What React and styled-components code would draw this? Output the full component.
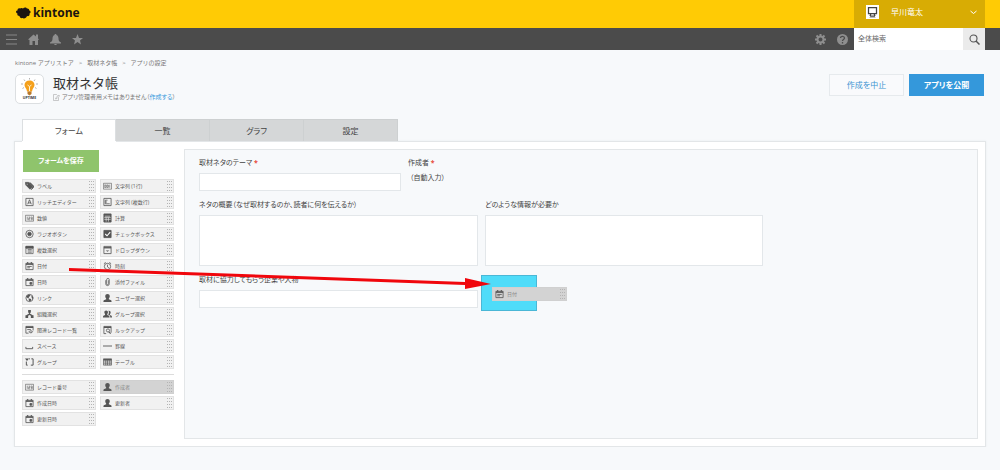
import React from "react"
import styled, { createGlobalStyle } from "styled-components"

const dark = "#555"

// field glyphs, drawn on a 20x20 grid
const glyphs = {
  tag: (
    <>
      <path fill="currentColor" d="M1 2h7l9 9-6 6-9-9z" />
      <path fill="currentColor" d="M10 3l8 8-4 7 5-5c1-1 1-2 0-3l-7-7z" />
      <circle cx="5" cy="6" r="1.6" fill="#fff" />
    </>
  ),
  text: (
    <>
      <path d="M1 4h18v13H1zM4 7v7M4 8h3v5H4M9 7v7M9 8h3v5H9M15 7v7" strokeWidth="1.3" />
    </>
  ),
  rich: <path d="M2 2h16v16H2zM6 15l4-10 4 10M7 12h6" />,
  multi: <path d="M2 2h16v16H2zM5 6h5M5 6v8h10M5 10h4" />,
  number: <path d="M1 4h18v13H1zM5 7v7M8 8h3v3H8v3h3M13 8h3v6h-3M13 11h3" strokeWidth="1.3" />,
  calc: (
    <>
      <path fill="currentColor" d="M2 1h16v18H2z" />
      <path stroke="#f1f1f1" strokeWidth="1.4" d="M4 6h12M3 9h14M3 13h14M7 9v9M12 9v9" />
    </>
  ),
  radio: (
    <>
      <circle cx="10" cy="10" r="8.2" />
      <circle cx="10" cy="10" r="4" fill="currentColor" />
    </>
  ),
  check: (
    <>
      <path fill="currentColor" d="M2 2h16v16H2z" />
      <path stroke="#fff" strokeWidth="2.4" d="M5 10l4 4 7-8" />
    </>
  ),
  list: (
    <>
      <path d="M2 2h16v16H2zM6 9h9M6 12h9M6 15h9" strokeWidth="1.6" />
      <path fill="currentColor" d="M2 2h16v4H2z" />
    </>
  ),
  dropdown: (
    <>
      <path d="M2 2h16v16H2z" />
      <path d="M2 5h16" strokeWidth="3" />
      <path fill="currentColor" stroke="none" d="M6 11h8l-4 3z" />
    </>
  ),
  date: (
    <>
      <path d="M2 4h16v14H2zM5 11h10M5 14h6" />
      <path d="M2 6h16" strokeWidth="3" />
      <path d="M6 1v4M14 1v4" strokeWidth="2.4" />
    </>
  ),
  datetime: (
    <>
      <path d="M2 4h16v14H2z" />
      <path d="M2 6h16" strokeWidth="3" />
      <path d="M6 1v4M14 1v4" strokeWidth="2.4" />
      <path fill="currentColor" d="M11 11h4v4h-4z" />
    </>
  ),
  time: (
    <>
      <circle cx="10" cy="11" r="7" />
      <path d="M10 7v5l3 2M2 5l4-3M18 5l-4-3" />
    </>
  ),
  clip: <path d="M6 6v8a4 4 0 0 0 8 0V5a3 3 0 0 0-6 0v9a1.5 1.5 0 0 0 4 0V6" strokeWidth="1.6" />,
  globe: (
    <>
      <circle cx="10" cy="10" r="8" />
      <path fill="currentColor" stroke="none" d="M3 6l5-4 4 1-1 3-3 2 1 2-2 1-4-3zM9 11l5 1-1 4-3 2-2-4zM14 5l4 3v5l-3-3z" />
    </>
  ),
  user: (
    <path fill="currentColor" stroke="none" d="M10 1c3 0 5 2 5 5 0 2-1 4-2 5v2l5 2c1 .6 1 2 1 4H1c0-2 0-3.400 1-4l5-2v-2C6 10 5 8 5 6c0-3 2-5 5-5z" />
  ),
  org: (
    <path fill="currentColor" stroke="none" d="M7 1h6v6h-2v2l6 4h2v6h-6v-5l-3-2-3 2v5H1v-6h2l6-4V7H7z" />
  ),
  group: (
    <path fill="currentColor" stroke="none" d="M7 2c2.500 0 4 1.600 4 4 0 2-1 3-1.500 4v2l4 2c.7.500 1 2 1 4H0c0-2 0-3.500 1-4l3.500-2v-2C4 9 3 8 3 6c0-2.400 1.600-4 4-4zM12 3c3-1 5 1 5 3.500 0 2-1 3-1.500 4v1.500l3.500 2c.7.500 1 2 1 4h-4c0-3 0-4-1.500-5L12 12v-1c1-2 2-5 0-8z" />
  ),
  related: (
    <>
      <path d="M8 17H2V2h16v9M5 9h8" />
      <path d="M2 4h16" strokeWidth="3" />
      <path d="M9 14c1-3 7-3 8 0-1 3-7 3-8 0zM13 14v1" />
    </>
  ),
  lookup: (
    <>
      <path d="M7 18H2V2h16v14" />
      <path d="M2 4h16" strokeWidth="3" />
      <circle cx="11" cy="11" r="3.5" />
      <path d="M13 14l4 4" strokeWidth="2.4" />
    </>
  ),
  space: <path d="M2 12v4h15v-4" strokeWidth="2" />,
  line: <path d="M0 10h20" strokeWidth="2" />,
  box: (
    <>
      <path d="M6 17H3V9M14 3h4v14h-5M9 3h2" strokeWidth="2.2" />
      <path fill="currentColor" stroke="none" d="M0 2h9L4.500 8z" />
    </>
  ),
  table: (
    <>
      <path d="M1 3h18v14H1zM1 10h18M1 14h18M6 6v11M10 6v11M15 6v11" strokeWidth="1.5" />
      <path d="M1 5h18" strokeWidth="4" />
    </>
  ),
}

function Glyph({ name }) {
  return (
    <GlyphSvg viewBox="0 0 20 20" aria-hidden="true">
      {glyphs[name]}
    </GlyphSvg>
  )
}

function Part({ icon, children, used }) {
  return (
    <PartButton type="button" $used={used}>
      <Glyph name={icon} />
      <span>{children}</span>
      <Grip />
    </PartButton>
  )
}

const basicParts = [
  ["tag", "ラベル"],
  ["text", "文字列 (1行)"],
  ["rich", "リッチエディター"],
  ["multi", "文字列 (複数行)"],
  ["number", "数値"],
  ["calc", "計算"],
  ["radio", "ラジオボタン"],
  ["check", "チェックボックス"],
  ["list", "複数選択"],
  ["dropdown", "ドロップダウン"],
  ["date", "日付"],
  ["time", "時刻"],
  ["datetime", "日時"],
  ["clip", "添付ファイル"],
  ["globe", "リンク"],
  ["user", "ユーザー選択"],
  ["org", "組織選択"],
  ["group", "グループ選択"],
  ["related", "関連レコード一覧"],
  ["lookup", "ルックアップ"],
  ["space", "スペース"],
  ["line", "罫線"],
  ["box", "グループ"],
  ["table", "テーブル"],
]

const systemParts = [
  ["number", "レコード番号"],
  ["user", "作成者", true],
  ["datetime", "作成日時"],
  ["user", "更新者"],
  ["datetime", "更新日時"],
]

function Header() {
  return (
    <header>
      <Brand>
        <Logo href="#">
          <svg width="15" height="12" viewBox="0 0 30 24" aria-hidden="true">
            <path fill="#1c1410" d="M8 3c2-2 5-1 6 0 2-3 7-3 8 0 3-1 5 2 4 4 4 0 4 5 1 6 1 4-2 6-5 5-1 4-6 6-9 4-3 1-6-1-6-4-4 0-5-3-4-5-4-1-4-6 0-6 0-3 2-5 5-4z" />
          </svg>
          kintone
        </Logo>
        <UserMenu type="button">
          <svg width="13" height="14" viewBox="0 0 26 28" aria-hidden="true">
            <path fill="#fff" d="M0 0h26v28H0z" />
            <path fill="none" stroke="#444" strokeWidth="2.5" d="M5 5h16v12H5zM10 17l-2 5M16 17l2 5M8 22h10" />
            <path fill="#bbb" d="M7 24h12v2H7z" />
          </svg>
          <UserName>早川竜太</UserName>
          <svg width="7" height="5" viewBox="0 0 14 10" aria-hidden="true">
            <path fill="none" stroke="#fff" strokeWidth="2" d="M1 2l6 5 6-5" />
          </svg>
        </UserMenu>
      </Brand>
      <Nav>
        <NavButton type="button" aria-label="メニュー">
          <svg viewBox="0 0 22 22"><path fill="none" stroke="currentColor" strokeWidth="1.8" d="M0 2h22M0 11h22M0 20h22" /></svg>
        </NavButton>
        <NavButton type="button" aria-label="ポータル">
          <svg viewBox="0 0 22 22"><path fill="currentColor" d="M11 1l5 4V1h4v8l2 2-2 1v10h-6v-8H9v8H3V12l-3-1z" /></svg>
        </NavButton>
        <NavButton type="button" aria-label="通知">
          <svg viewBox="0 0 22 22"><path fill="currentColor" d="M11 0c1.500 0 2 1 2 2 3 1 4 4 4 7 0 4 1 6 5 8v2H0v-2c4-2 5-4 5-8 0-3 1-6 4-7 0-1 .5-2 2-2zM8 20h6c-1 3-5 3-6 0z" /></svg>
        </NavButton>
        <NavButton type="button" aria-label="ブックマーク">
          <svg viewBox="0 0 22 22"><path fill="currentColor" d="M11 0l3 8h8l-6 5 2 8-7-5-7 5 2-8-6-5h8z" /></svg>
        </NavButton>
        <NavSpacer />
        <NavButton type="button" aria-label="設定メニュー">
          <svg viewBox="0 0 22 22">
            <circle cx="11" cy="11" r="6" fill="none" stroke="currentColor" strokeWidth="4" />
            <path stroke="currentColor" strokeWidth="4" d="M11 0v4M11 18v4M0 11h4M18 11h4M3 3l3 3M16 16l3 3M3 19l3-3M16 6l3-3" />
          </svg>
        </NavButton>
        <NavButton type="button" aria-label="ヘルプ">
          <svg viewBox="0 0 22 22">
            <circle cx="11" cy="11" r="11" fill="currentColor" />
            <path fill="none" stroke="#4b4b4b" strokeWidth="2.6" d="M7 8c0-5 8-4 8 0 0 3-4 3-4 6M11 16v3" />
          </svg>
        </NavButton>
        <Search>
          <SearchInput type="search" placeholder="全体検索" aria-label="全体検索" />
          <SearchButton type="button" aria-label="検索">
            <svg width="11" height="11" viewBox="0 0 22 22">
              <circle cx="9" cy="9" r="7" fill="none" stroke="#555" strokeWidth="2.2" />
              <path stroke="#555" strokeWidth="3" d="M14 14l7 7" />
            </svg>
          </SearchButton>
        </Search>
      </Nav>
    </header>
  )
}

function AppHeading() {
  return (
    <Heading>
      <AppIcon>
        <svg width="23" height="23" viewBox="0 0 46 46" aria-hidden="true">
          <path fill="#f4a01c" d="M23 5c6 0 10 4 10 9 0 4-3 6-4 9l-1 4H18l-1-4c-1-3-4-5-4-9 0-5 4-9 10-9z" />
          <path fill="#b9782a" d="M19 27h8v5l-4 3-4-3z" />
          <path stroke="#fff3d0" strokeWidth="2" fill="none" d="M19 14l4 3 4-3M23 17v9" />
          <path stroke="#999" strokeWidth="1.5" d="M23 0v3M12 3l2 3M34 3l-2 3M6 12h4M36 12h4M9 21l3-2M37 21l-3-2" />
          <text x="23" y="42" fontSize="7" fontWeight="700" textAnchor="middle" fill="#333">UPTIME</text>
        </svg>
      </AppIcon>
      <TitleBlock>
        <Title>取材ネタ帳</Title>
        <Memo>
          <svg width="7" height="7" viewBox="0 0 14 14" aria-hidden="true">
            <path fill="none" stroke="#999" d="M11 7v6H1V1h6l2 2M5 10l1-3 6-5 1 2-5 5z" />
          </svg>
          <span>アプリ管理者用メモはありません（<MemoLink href="#">作成する</MemoLink>）</span>
        </Memo>
      </TitleBlock>
      <Action type="button">作成を中止</Action>
      <Action type="button" $primary>アプリを公開</Action>
    </Heading>
  )
}

function App() {
  return (
    <>
      <GlobalStyle />
      <Header />
      <Page>
        <Crumbs aria-label="パンくず">
          <a href="#">kintone アプリストア</a>
          <span>&gt;</span>
          <a href="#">取材ネタ帳</a>
          <span>&gt;</span>
          <span>アプリの設定</span>
        </Crumbs>
        <AppHeading />
        <Tabs role="tablist">
          <Tab type="button" role="tab" aria-selected="true" $active>フォーム</Tab>
          <Tab type="button" role="tab" aria-selected="false">一覧</Tab>
          <Tab type="button" role="tab" aria-selected="false">グラフ</Tab>
          <Tab type="button" role="tab" aria-selected="false">設定</Tab>
        </Tabs>
        <Workspace>
          <Palette>
            <SaveButton type="button">フォームを保存</SaveButton>
            <Parts>
              {basicParts.map(([icon, name]) => (
                <Part key={name} icon={icon}>{name}</Part>
              ))}
            </Parts>
            <Divider />
            <Parts>
              {systemParts.map(([icon, name, used]) => (
                <Part key={name} icon={icon} used={used}>{name}</Part>
              ))}
            </Parts>
          </Palette>
          <Canvas>
            <Row>
              <Field $width={202}>
                <Label htmlFor="theme">取材ネタのテーマ <Required>*</Required></Label>
                <TextInput id="theme" type="text" />
              </Field>
              <Field $width={100}>
                <Label as="span">作成者 <Required>*</Required></Label>
                <AutoValue>（自動入力）</AutoValue>
              </Field>
            </Row>
            <Row>
              <Field $width={279}>
                <Label htmlFor="summary">ネタの概要（なぜ取材するのか、読者に何を伝えるか）</Label>
                <TextArea id="summary" />
              </Field>
              <Field $width={278}>
                <Label htmlFor="info">どのような情報が必要か</Label>
                <TextArea id="info" />
              </Field>
            </Row>
            <Row $tight>
              <Field $width={279}>
                <Label htmlFor="partner">取材に協力してもらう企業や人物</Label>
                <TextInput id="partner" type="text" />
              </Field>
              <DropTarget>
                <Dragged>
                  <Part icon="date" used>日付</Part>
                </Dragged>
              </DropTarget>
            </Row>
          </Canvas>
          <Arrow viewBox="0 0 422 28" aria-hidden="true">
            <path fill="#f0060c" d="M0 5l396 14v-4l26 6-26 5v-4L0 8z" />
          </Arrow>
        </Workspace>
      </Page>
    </>
  )
}

export default App

const GlobalStyle = createGlobalStyle`
  * {
    box-sizing: border-box;
  }

  body {
    margin: 0;
    background: #f7f9fb;
    color: #444;
    font-family: "Open Sans", "Noto Sans CJK JP", sans-serif;
    font-size: 7px;
    line-height: 10px;
    font-feature-settings: "palt";
  }

  button,
  input,
  textarea {
    margin: 0;
    padding: 0;
    border: 0;
    border-radius: 0;
    background: none;
    color: inherit;
    font: inherit;
    font-feature-settings: inherit;
  }

  button {
    cursor: pointer;
  }

  a {
    color: inherit;
    text-decoration: none;
  }

  svg {
    display: block;
    flex: none;
  }
`
const Brand = styled.div`
  display: flex;
  justify-content: space-between;
  height: 28px;
  padding: 0 15px 0 16px;
  background: #ffcb05;
`
const Logo = styled.a`
  display: flex;
  align-items: center;
  gap: 2px;
  padding-bottom: 3px;
  color: #1c1410;
  font-size: 12px;
  font-weight: 700;
`
const UserMenu = styled.button`
  display: flex;
  align-items: center;
  width: 131px;
  padding: 0 8px 4px 12px;
  background: #d8ac04;
  color: #fff;
  font-size: 8px;
`
const UserName = styled.span`
  flex: 1;
  padding-left: 12px;
  text-align: left;
`
const Nav = styled.nav`
  display: flex;
  align-items: center;
  gap: 11px;
  height: 22px;
  padding: 0 15px 0 6px;
  background: #4b4b4b;
`
const NavButton = styled.button`
  width: 11px;
  height: 11px;
  color: #8e8e8e;
`
const NavSpacer = styled.div`
  flex: 1;
`
const Search = styled.div`
  display: flex;
  align-self: stretch;
  width: 131px;
  margin-left: -5px;
  background: #fff;
`
const SearchInput = styled.input`
  flex: 1;
  min-width: 0;
  padding: 0 4px;
  outline: none;

  &::placeholder {
    color: #666;
    opacity: 1;
  }
`
const SearchButton = styled.button`
  display: flex;
  align-items: center;
  justify-content: center;
  width: 22px;
  background: #ebebeb;
`
const Page = styled.main`
  padding: 8px 14px 0;
`
const Crumbs = styled.nav`
  display: flex;
  gap: 5px;
  padding-left: 1px;
  color: #777;
  font-size: 6px;
  font-feature-settings: normal;
`
const Heading = styled.div`
  display: flex;
  align-items: flex-start;
  gap: 5px;
  margin-top: 6px;
  padding: 0 2px 0 1px;
`
const AppIcon = styled.div`
  display: flex;
  align-items: center;
  justify-content: center;
  width: 29px;
  height: 30px;
  border: 1px solid #dcdfe1;
  border-radius: 5px;
  background: #fff;
`
const TitleBlock = styled.div`
  flex: 1;
  padding-left: 4px;
`
const Title = styled.h1`
  margin: 0;
  color: #333;
  font-size: 13px;
  font-weight: 400;
  line-height: 18px;
  font-feature-settings: normal;
`
const Memo = styled.div`
  display: flex;
  align-items: center;
  gap: 2px;
  color: #777;
  font-size: 6px;
`
const MemoLink = styled.a`
  color: #3498db;
`
const Action = styled.button`
  width: 75px;
  height: 22px;
  border: 1px solid ${props => (props.$primary ? "#3498db" : "#e6eaed")};
  background: ${props => (props.$primary ? "#3498db" : "#f9fafc")};
  color: ${props => (props.$primary ? "#fff" : "#3d94d1")};
  font-size: 8px;
  font-weight: ${props => (props.$primary ? 700 : 400)};
`
const Tabs = styled.div`
  display: flex;
  margin-top: 15px;
  padding-left: 8px;
`
const Tab = styled.button`
  width: 94px;
  height: 22px;
  border: 1px solid ${props => (props.$active ? "#dcdfe1" : "#cdd0d1")};
  border-bottom: 0;
  border-left-width: ${props => (props.$active ? "1px" : "0")};
  background: ${props => (props.$active ? "#fff" : "#d5d7d8")};
  font-size: 8px;
  position: relative;
  z-index: 1;
  box-shadow: ${props => (props.$active ? "0 1px 0 #fff" : "none")};
`
const Workspace = styled.section`
  position: relative;
  display: flex;
  gap: 10px;
  padding: 7px;
  border: 1px solid #e3e6e8;
  background: #fff;
  box-shadow: 0 0 2px #e9ecee;
`
const Palette = styled.div`
  width: 152px;
`
const SaveButton = styled.button`
  width: 76px;
  height: 22px;
  margin: 1px 0 7px 1px;
  background: #8fc46c;
  color: #fff;
  font-weight: 700;
`
const Parts = styled.div`
  display: grid;
  grid-template-columns: 1fr 1fr;
  gap: 2px 4px;
`
const PartButton = styled.button`
  display: flex;
  align-items: center;
  gap: 3px;
  width: 100%;
  height: 14px;
  padding: 0 1px 0 2px;
  border: 1px solid ${props => (props.$used ? "#d0d0d0" : "#e2e2e2")};
  background: ${props => (props.$used ? "#d3d3d3" : "#f1f1f1")};
  color: ${props => (props.$used ? "#888" : "#555")};
  font-size: 5px;
  line-height: 8px;
  white-space: nowrap;
  font-feature-settings: normal;
`
const GlyphSvg = styled.svg`
  width: 9px;
  height: 10px;
  color: ${dark};
  fill: none;
  stroke: currentColor;
  stroke-width: 1.8;
`
const Grip = styled.span`
  width: 5px;
  height: 10px;
  margin-left: auto;
  background-image: conic-gradient(at 1px 1px, transparent 75%, #b4b4b4 0);
  background-size: 2px 3px;
`
const Divider = styled.hr`
  margin: 5px 0;
  border: 0;
  border-top: 1px solid #dcdcdc;
`
const Canvas = styled.div`
  flex: 1;
  display: flex;
  flex-direction: column;
  gap: 9px;
  min-width: 0;
  min-height: 290px;
  padding: 8px 14px;
  border: 1px solid #e3e6e8;
  background: #f7f9fb;
`
const Row = styled.div`
  display: flex;
  gap: ${props => (props.$tight ? "3px" : "7px")};
`
const Field = styled.div`
  flex: 0 1 ${props => props.$width}px;
  min-width: 0;
  display: flex;
  flex-direction: column;
  gap: 5px;
`
const Label = styled.label`
  display: block;
  white-space: nowrap;
`
const Required = styled.span`
  color: #e74c3c;
  font-weight: 700;
`
const TextInput = styled.input`
  height: 18px;
  padding: 0 4px;
  border: 1px solid #e3e7ea;
  background: #fff;
`
const TextArea = styled.textarea`
  height: 51px;
  padding: 4px;
  border: 1px solid #e3e7ea;
  background: #fff;
  resize: none;
`
const AutoValue = styled.span`
  padding-left: 2px;
`
const DropTarget = styled.div`
  position: relative;
  width: 56px;
  height: 36px;
  border: 1px solid #4ab7d6;
  background: #4fdcf9;
`
const Dragged = styled.div`
  position: absolute;
  top: 11px;
  left: 10px;
  width: 75px;
`
const Arrow = styled.svg`
  position: absolute;
  top: 121px;
  left: 54px;
  width: 422px;
  height: 28px;
  pointer-events: none;
`
